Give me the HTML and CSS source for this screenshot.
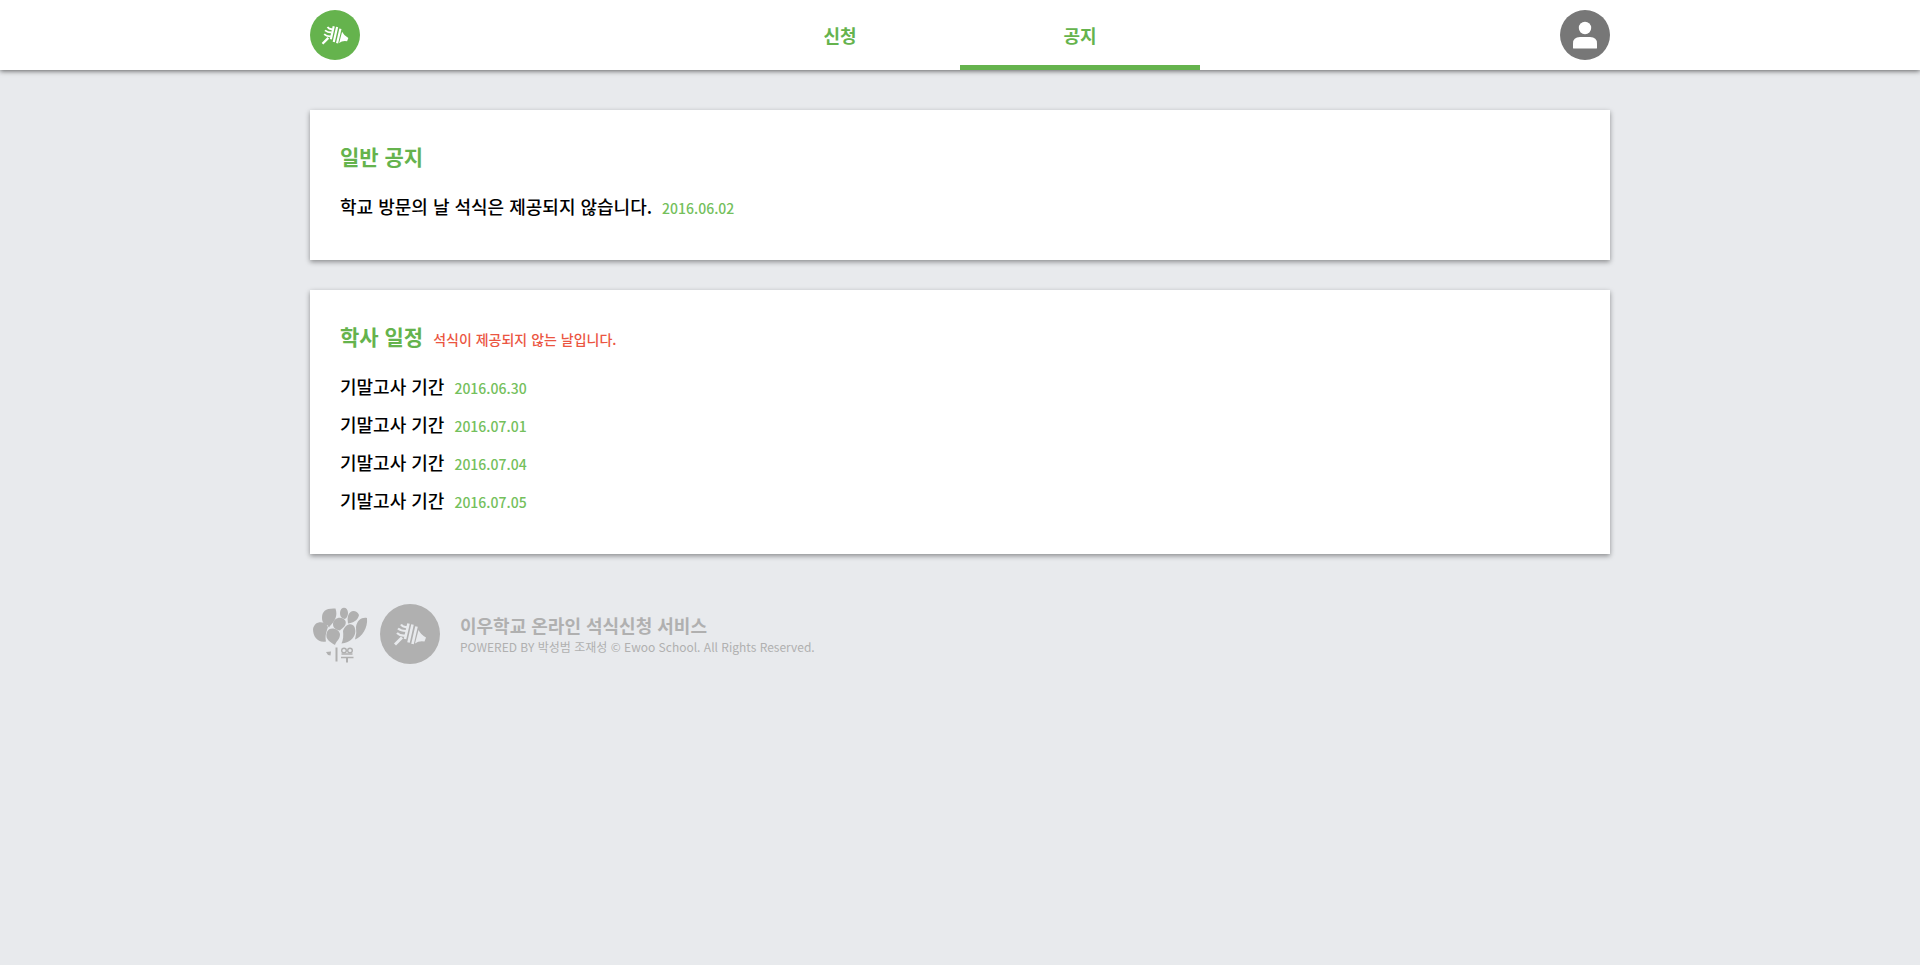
FILE: index.html
```html
<!DOCTYPE html>
<html lang="ko">
<head>
<meta charset="utf-8">
<meta name="viewport" content="width=device-width, initial-scale=1">
<title>이우학교 온라인 석식신청 서비스</title>
<link rel="stylesheet" href="styles.css">
</head>
<body>
<svg class="defs" aria-hidden="true">
  <symbol id="fork" viewBox="0 0 60 60">
    <circle cx="30" cy="30" r="30" fill="currentColor"/>
    <g class="fork-lines">
      <path d="M15 40.500L22 33.500" stroke-width="2.800"/>
      <path d="M21 20.500Q23 23.500 27 23M18 24.500Q21 27 26 27M17 29Q20 32 25 31.500" stroke-width="2.200"/>
      <path d="M28.500 19.500L25 35M32.500 20.500L28.500 38.500M36.500 22.500L32.500 40" stroke-width="2.600"/>
    </g>
    <path class="fork-fill" d="M38.500 26Q41 31 46 33.500L44.500 37.500Q39 36.500 35 39.500Z"/>
  </symbol>
</svg>
<header class="header">
  <div class="container header-row">
    <a class="logo" href="#" aria-label="홈"><svg class="logo-icon"><use href="#fork"/></svg></a>
    <nav class="tabs">
      <a class="tab" href="#">신청</a>
      <a class="tab tab-active" href="#" aria-current="page">공지</a>
    </nav>
    <button class="account" type="button" aria-label="내 계정">
      <svg class="account-icon" viewBox="0 0 50 50">
        <circle cx="25" cy="25" r="25" fill="#777"/>
        <circle cx="25" cy="18" r="6.200" fill="#fff"/>
        <path d="M13 38V33.500Q13 27 20 27H30Q37 27 37 33.500V38Q37 38.500 36 38.500H14Q13 38.500 13 38Z" fill="#fff"/>
      </svg>
    </button>
  </div>
</header>
<main class="container content">
  <section class="card">
    <h2 class="card-title">일반 공지</h2>
    <ul class="list">
      <li class="item">학교 방문의 날 석식은 제공되지 않습니다.<time class="date" datetime="2016-06-02">2016.06.02</time></li>
    </ul>
  </section>
  <section class="card">
    <h2 class="card-title">학사 일정<span class="note">석식이 제공되지 않는 날입니다.</span></h2>
    <ul class="list">
      <li class="item">기말고사 기간<time class="date" datetime="2016-06-30">2016.06.30</time></li>
      <li class="item">기말고사 기간<time class="date" datetime="2016-07-01">2016.07.01</time></li>
      <li class="item">기말고사 기간<time class="date" datetime="2016-07-04">2016.07.04</time></li>
      <li class="item">기말고사 기간<time class="date" datetime="2016-07-05">2016.07.05</time></li>
    </ul>
  </section>
</main>
<footer class="container footer">
  <svg class="footer-icon" viewBox="0 0 60 60" role="img" aria-label="이우학교">
    <g fill="currentColor">
      <path d="M12 14C12 7 16 4 25.500 4.500C28 12 25 17 19.500 22.500C20 24 18 23.500 18 21.500C14 21 12 18 12 14Z"/>
      <path d="M30 9C30 2 38 2 38 9C38 12 36 15 34.500 15C31 14 30 12 30 9Z"/>
      <path d="M38 12C40 5 47 6 49 11C48 17 42 19 38 19.500Q37 15 38 12Z"/>
      <path d="M23 20C23 14 32 11 35.500 17C37 22 32 24 30 26.500C26 26 23 24 23 20Z"/>
      <path d="M3 25C5 16 15 17 18 23C16 29 15 32 16 37.500C8 39 3 33 3 25Z"/>
      <path d="M17 28C19 22 29 24 30 30C30 36 26 37 25 41C22 39 14 36 17 28Z"/>
      <path d="M33 27C35 20 42 18 44.500 23C48 32 40 39 31.500 39.500Q34 34 33 27Z"/>
      <path d="M46 23C47 16 52 13 57 14C58 24 52 33 45 35.500Q47 29 46 23Z"/>
      <path d="M16 48L21 47.500L20.500 51.500L18 51Z"/>
    </g>
    <path d="M26.500 43.500V57.500M37 53.500V58.500" stroke="currentColor" stroke-width="2" fill="none"/>
    <path d="M31.500 50H42.500M31 53.500H43.500" stroke="currentColor" stroke-width="1.400" fill="none"/>
    <circle cx="34" cy="46.500" r="2.300" stroke="currentColor" stroke-width="1.400" fill="none"/>
    <circle cx="40" cy="46.500" r="2.300" stroke="currentColor" stroke-width="1.400" fill="none"/>
  </svg>
  <svg class="footer-icon footer-fork" aria-hidden="true"><use href="#fork"/></svg>
  <div class="footer-text">
    <p class="service">이우학교 온라인 석식신청 서비스</p>
    <p class="copyright">POWERED BY 박성범 조재성 © Ewoo School. All Rights Reserved.</p>
  </div>
</footer>
</body>
</html>
```
FILE: styles.css
```css
* { box-sizing: border-box; }
body {
  margin: 0;
  min-height: 100vh;
  background: #e8eaed;
  color: #000;
  font-family: "Noto Sans CJK KR", sans-serif;
  font-weight: 400;
}
.defs { display: none; }
.container { width: 100%; max-width: 1300px; margin: 0 auto; }
.header {
  height: 70px;
  background: #fff;
  box-shadow: 0 1px 5px rgba(0, 0, 0, 0.6);
}
.header-row {
  height: 100%;
  display: grid;
  grid-template-columns: 1fr auto 1fr;
  align-items: center;
}
.logo { justify-self: start; display: block; height: 50px; color: #65b34d; }
.logo-icon, .account-icon { display: block; width: 50px; height: 50px; }
.fork-lines { stroke: var(--fork, #fff); fill: none; }
.fork-fill { fill: var(--fork, #fff); }
.tabs { display: flex; height: 100%; }
.tab {
  width: 240px;
  display: flex;
  align-items: center;
  justify-content: center;
  border-top: 5px solid transparent;
  border-bottom: 5px solid transparent;
  color: #65b34d;
  font-size: 18px;
  font-weight: 700;
  text-decoration: none;
}
.tab-active { border-bottom-color: #65b34d; }
.account { justify-self: end; padding: 0; border: 0; background: none; cursor: pointer; }
.content { display: grid; gap: 30px; padding-top: 40px; }
.card {
  padding: 30px 30px 35px;
  background: #fff;
  box-shadow: 0 2px 5px rgba(0, 0, 0, 0.4);
}
.card-title {
  margin: 0 0 15px;
  color: #65b34d;
  font-size: 21px;
  font-weight: 700;
  line-height: 32px;
}
.note { margin-left: 10px; color: #eb5541; font-size: 14px; font-weight: 500; line-height: 1; }
.list { margin: 0; padding: 0; list-style: none; }
.item { font-size: 18px; font-weight: 500; line-height: 38px; }
.date { margin-left: 10px; color: #74c05c; font-size: 14px; line-height: 1; }
.footer {
  display: flex;
  align-items: center;
  padding: 50px 0 40px;
  color: #b0b0b0;
}
.footer-icon { width: 60px; height: 60px; flex: none; }
.footer-fork { margin-left: 10px; --fork: #e8eaed; }
.footer-text { margin-left: 20px; }
.service { margin: 0; font-size: 18px; font-weight: 700; line-height: 26px; }
.copyright { margin: 0; font-size: 12px; line-height: 18px; }
```
